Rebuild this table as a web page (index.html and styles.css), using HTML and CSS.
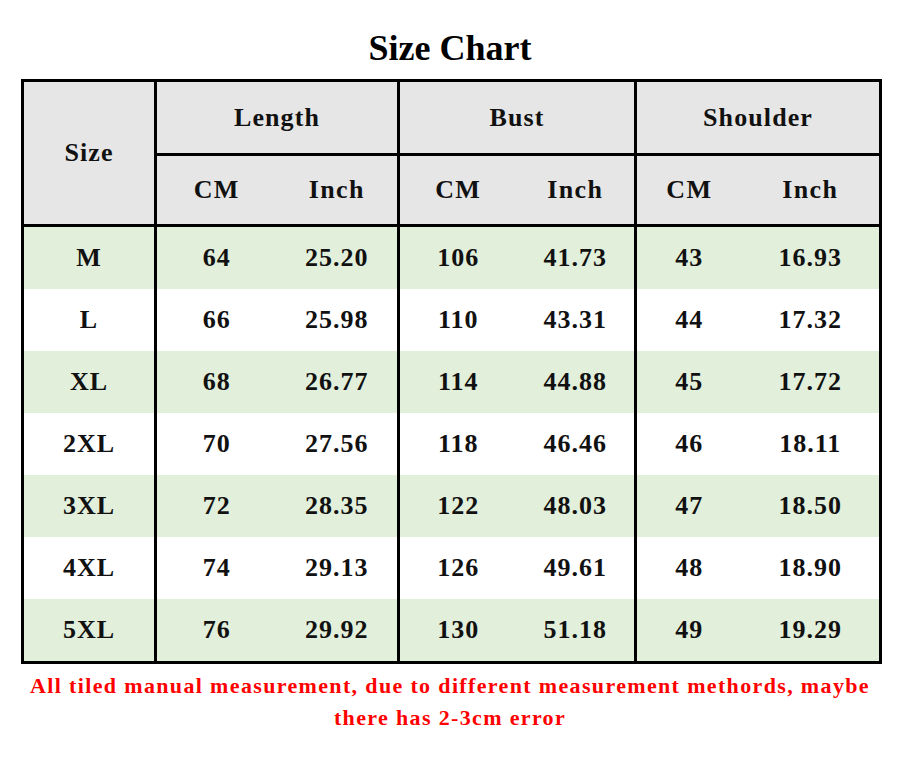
FILE: index.html
```html
<!DOCTYPE html>
<html>
<head>
<meta charset="utf-8">
<link rel="stylesheet" href="styles.css">
</head>
<body>
<h1 class="title">Size Chart</h1>
<table class="chart">
  <colgroup>
    <col class="c-size">
    <col class="c-l1"><col class="c-l2">
    <col class="c-b1"><col class="c-b2">
    <col class="c-s1"><col class="c-s2">
  </colgroup>
  <thead>
    <tr class="h1">
      <th rowspan="2">Size</th>
      <th colspan="2">Length</th>
      <th colspan="2">Bust</th>
      <th colspan="2">Shoulder</th>
    </tr>
    <tr class="h2">
      <th class="gl">CM</th><th class="gr">Inch</th>
      <th class="gl">CM</th><th class="gr">Inch</th>
      <th class="gl">CM</th><th class="gr">Inch</th>
    </tr>
  </thead>
  <tbody>
    <tr class="green"><td>M</td><td class="gl">64</td><td>25.20</td><td class="gl">106</td><td>41.73</td><td class="gl">43</td><td>16.93</td></tr>
    <tr><td>L</td><td class="gl">66</td><td>25.98</td><td class="gl">110</td><td>43.31</td><td class="gl">44</td><td>17.32</td></tr>
    <tr class="green"><td>XL</td><td class="gl">68</td><td>26.77</td><td class="gl">114</td><td>44.88</td><td class="gl">45</td><td>17.72</td></tr>
    <tr><td>2XL</td><td class="gl">70</td><td>27.56</td><td class="gl">118</td><td>46.46</td><td class="gl">46</td><td>18.11</td></tr>
    <tr class="green"><td>3XL</td><td class="gl">72</td><td>28.35</td><td class="gl">122</td><td>48.03</td><td class="gl">47</td><td>18.50</td></tr>
    <tr><td>4XL</td><td class="gl">74</td><td>29.13</td><td class="gl">126</td><td>49.61</td><td class="gl">48</td><td>18.90</td></tr>
    <tr class="green last"><td>5XL</td><td class="gl">76</td><td>29.92</td><td class="gl">130</td><td>51.18</td><td class="gl">49</td><td>19.29</td></tr>
  </tbody>
</table>
<p class="note">All tiled manual measurement, due to different measurement methords, maybe<br>there has 2-3cm error</p>
</body>
</html>
```
FILE: styles.css
```css
html, body {
  margin: 0;
  padding: 0;
  background: #fff;
}
body {
  width: 900px;
  font-family: "Liberation Serif", "Times New Roman", serif;
  color: #111;
}
.title {
  margin: 0;
  padding-top: 28px;
  height: 40px;
  line-height: 40px;
  font-size: 36px;
  font-weight: bold;
  text-align: center;
  color: #000;
}
.chart {
  margin: 11px 0 0 21px;
  border-collapse: collapse;
  table-layout: fixed;
  width: 861px;
  border: 3px solid #000;
  font-size: 26px;
  font-weight: bold;
}
.c-size { width: 133px; }
.c-l1 { width: 121px; }
.c-l2 { width: 122px; }
.c-b1 { width: 118px; }
.c-b2 { width: 119px; }
.c-s1 { width: 106px; }
.c-s2 { width: 139px; }
.chart th {
  background: #e7e6e6;
  border: 3px solid #000;
  padding: 0;
  text-align: center;
  font-weight: bold;
  letter-spacing: 1.1px;
}
.chart th.gl { border-right: none; }
.chart th.gr { border-left: none; }
.h1 th { height: 71px; font-size: 26px; }
.h2 th { height: 68px; font-size: 26px; letter-spacing: 1.4px; }
.chart td {
  padding: 0;
  height: 62px;
  text-align: center;
  border: none;
  letter-spacing: 1px;
}
.chart td:first-child { border-right: 3px solid #000; }
.chart td.gl { border-left: 3px solid #000; }
.chart tr.green td { background: #e2efda; }
.note {
  margin: 6px 0 0;
  text-align: center;
  color: #ff0000;
  font-size: 22px;
  line-height: 32px;
  font-weight: bold;
  letter-spacing: 1.35px;
}
```
